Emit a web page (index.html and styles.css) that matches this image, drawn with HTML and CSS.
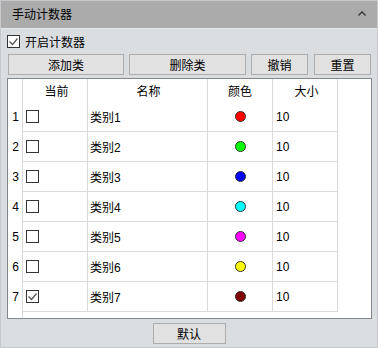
FILE: index.html
```html
<!DOCTYPE html>
<html>
<head>
<meta charset="utf-8">
<link rel="stylesheet" href="styles.css">
</head>
<body>
<div class="panel">
  <div class="header">
    <span class="title">手动计数器</span>
    <svg class="chev" width="8" height="5" viewBox="0 0 8 5"><polyline points="0.5,4.5 4,1 7.5,4.5" fill="none" stroke="#333" stroke-width="1.3"/></svg>
  </div>
  <div class="body">
    <div class="toggle">
      <span class="cb"><svg width="11" height="11" viewBox="0 0 11 11"><polyline points="1.5,5.5 4.5,8.5 9.5,2.5" fill="none" stroke="#555" stroke-width="1.2"/></svg></span>
      <span class="toggle-label">开启计数器</span>
    </div>
    <div class="buttons">
      <button class="btn">添加类</button>
      <button class="btn">删除类</button>
      <button class="btn">撤销</button>
      <button class="btn">重置</button>
    </div>
    <div class="table">
      <div class="row head">
        <div class="c num"></div>
        <div class="c cur center">当前</div>
        <div class="c name center">名称</div>
        <div class="c color center">颜色</div>
        <div class="c size center">大小</div>
      </div>
      <div class="row">
        <div class="c num">1</div>
        <div class="c cur"><span class="cb"></span></div>
        <div class="c name">类别1</div>
        <div class="c color center"><span class="dot red"></span></div>
        <div class="c size">10</div>
      </div>
      <div class="row">
        <div class="c num">2</div>
        <div class="c cur"><span class="cb"></span></div>
        <div class="c name">类别2</div>
        <div class="c color center"><span class="dot green"></span></div>
        <div class="c size">10</div>
      </div>
      <div class="row">
        <div class="c num">3</div>
        <div class="c cur"><span class="cb"></span></div>
        <div class="c name">类别3</div>
        <div class="c color center"><span class="dot blue"></span></div>
        <div class="c size">10</div>
      </div>
      <div class="row">
        <div class="c num">4</div>
        <div class="c cur"><span class="cb"></span></div>
        <div class="c name">类别4</div>
        <div class="c color center"><span class="dot cyan"></span></div>
        <div class="c size">10</div>
      </div>
      <div class="row">
        <div class="c num">5</div>
        <div class="c cur"><span class="cb"></span></div>
        <div class="c name">类别5</div>
        <div class="c color center"><span class="dot magenta"></span></div>
        <div class="c size">10</div>
      </div>
      <div class="row">
        <div class="c num">6</div>
        <div class="c cur"><span class="cb"></span></div>
        <div class="c name">类别6</div>
        <div class="c color center"><span class="dot yellow"></span></div>
        <div class="c size">10</div>
      </div>
      <div class="row">
        <div class="c num">7</div>
        <div class="c cur"><span class="cb"><svg width="11" height="11" viewBox="0 0 11 11"><polyline points="1.5,5.5 4.5,8.5 9.5,2.5" fill="none" stroke="#555" stroke-width="1.2"/></svg></span></div>
        <div class="c name">类别7</div>
        <div class="c color center"><span class="dot maroon"></span></div>
        <div class="c size">10</div>
      </div>
      <div class="filler"><div class="num"></div></div>
    </div>
    <div class="footer">
      <button class="btn default">默认</button>
    </div>
  </div>
</div>
</body>
</html>
```

FILE: styles.css
```css
* { box-sizing: border-box; }
html, body { margin: 0; padding: 0; }
body {
  font-family: "Noto Sans CJK SC", "Liberation Sans", sans-serif;
  font-size: 12px;
  color: #000;
  background: #dadde0;
}
.panel {
  width: 378px;
  height: 348px;
  border: 1px solid #c6c9cd;
  background: #dadde0;
  display: flex;
  flex-direction: column;
}
.header {
  height: 28px;
  background: #ababab;
  border-bottom: 1px solid #e6e8ea;
  display: flex;
  align-items: center;
  justify-content: space-between;
  padding: 0 11px 1px 11px;
}
.title { line-height: 14px; }
.chev { display: block; margin-top: -1px; }
.body {
  flex: 1;
  display: flex;
  flex-direction: column;
  padding: 6px 6px 0 6px;
}
.toggle {
  height: 13px;
  display: flex;
  align-items: center;
  gap: 5px;
  padding-left: 0px;
}
.toggle-label { line-height: 13px; }
.cb {
  width: 13px;
  height: 13px;
  border: 1px solid #333;
  background: #fff;
  display: inline-flex;
  align-items: center;
  justify-content: center;
  flex: none;
}
.cb svg { display: block; }
.buttons {
  margin: 6px 0 0 1px;
  display: grid;
  grid-template-columns: 116px 117px 57px 57px;
  column-gap: 5px;
}
.btn {
  height: 21px;
  border: 1px solid #adadad;
  background: #e1e1e1;
  font-family: "Noto Sans CJK SC", "Liberation Sans", sans-serif;
  font-size: 12px;
  color: #000;
  padding: 0;
  line-height: 19px;
}
.buttons .btn:nth-child(4) { margin-left: 1px; width: 57px; }
.table {
  margin-top: 3px;
  width: 365px;
  height: 241px;
  border: 1px solid #828790;
  background: #fff;
  display: flex;
  flex-direction: column;
}
.row {
  display: flex;
  height: 30px;
}
.row.head { height: 23px; }
.c {
  display: flex;
  align-items: center;
  border-right: 1px solid #dadada;
  border-bottom: 1px solid #dadada;
  font-family: "Liberation Sans", "Noto Sans CJK SC", sans-serif;
}
.row.head .c { border-bottom: none; }
.c.center { justify-content: center; }
.num {
  width: 15px;
  justify-content: center;
  border-bottom: none;
  padding-left: 1px;
}
.cur { width: 65px; padding-left: 3px; }
.name { width: 120px; padding-left: 2px; }
.color { width: 65px; }
.size { width: 65px; padding-left: 3px; }
.row.head .c { font-family: "Noto Sans CJK SC", sans-serif; }
.filler { flex: 1; display: flex; }
.filler .num { border-right: 1px solid #dadada; }
.dot {
  width: 11px;
  height: 11px;
  border-radius: 50%;
  border: 1px solid #333;
  display: block;
}
.red { background: #ff0000; }
.green { background: #00ff00; }
.blue { background: #0000ff; }
.cyan { background: #00ffff; }
.magenta { background: #ff00ff; }
.yellow { background: #ffff00; }
.maroon { background: #800000; }
.footer {
  margin-top: 4px;
  display: flex;
  justify-content: center;
}
.default { width: 73px; }
```
